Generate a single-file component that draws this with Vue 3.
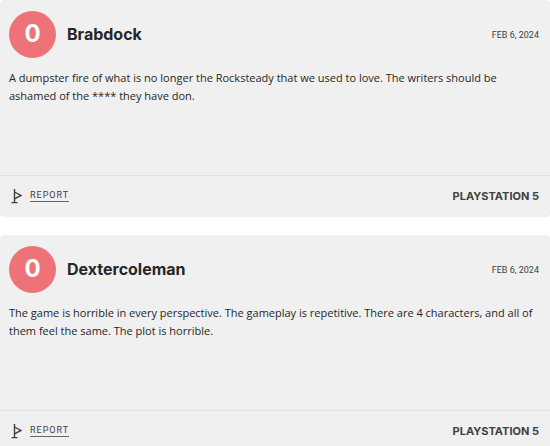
<script setup>
const reviews = [
  {
    id: 1,
    score: 0,
    author: 'Brabdock',
    date: 'Feb 6, 2024',
    text: 'A dumpster fire of what is no longer the Rocksteady that we used to love. The writers should be ashamed of the **** they have don.',
    platform: 'PlayStation 5',
  },
  {
    id: 2,
    score: 0,
    author: 'Dextercoleman',
    date: 'Feb 6, 2024',
    text: 'The game is horrible in every perspective. The gameplay is repetitive. There are 4 characters, and all of them feel the same. The plot is horrible.',
    platform: 'PlayStation 5',
  },
]
</script>

<template>
  <main class="reviews">
    <article v-for="review in reviews" :key="review.id" class="card">
      <header class="head">
        <span class="score">{{ review.score }}</span>
        <h3 class="author">{{ review.author }}</h3>
        <time class="date">{{ review.date }}</time>
      </header>
      <p class="text">{{ review.text }}</p>
      <footer class="foot">
        <button type="button" class="report">
          <svg class="flag" viewBox="0 0 12 16" aria-hidden="true">
            <path d="M3.5 1v14M.5 14.6h6" />
            <path d="M3.5 4l6.5 3.4-6.5 3.4" />
          </svg>
          <span class="report-label">Report</span>
        </button>
        <span class="platform">{{ review.platform }}</span>
      </footer>
    </article>
  </main>
</template>

<style>
body {
  margin: 0;
  background: #fff;
}
</style>

<style scoped>
.reviews {
  display: flex;
  flex-direction: column;
  gap: 18px;
  height: 100vh;
  overflow: hidden;
  font-family: Inter, "Liberation Sans", sans-serif;
  color: #262626;
}

.card {
  display: flex;
  flex: none;
  flex-direction: column;
  border-radius: 4px;
  background: #f0f0f0;
}

.head {
  display: flex;
  align-items: center;
  gap: 11px;
  padding: 11px 11px 0 9px;
}

.score {
  display: flex;
  align-items: center;
  justify-content: center;
  width: 47px;
  height: 47px;
  border-radius: 50%;
  background: #ee7378;
  color: #fff;
  font-size: 24px;
  font-weight: 700;
  line-height: 24px;
  padding-bottom: 2px;
  box-sizing: border-box;
}

.author {
  flex: 1;
  margin: 0;
  padding-bottom: 2px;
  font-size: 16px;
  font-weight: 700;
  line-height: 24px;
}

.date {
  color: #404040;
  font-family: Roboto, sans-serif;
  font-size: 9px;
  line-height: 12px;
  text-transform: uppercase;
}

.text {
  min-height: 94px;
  margin: 0;
  padding: 11px 9px 12px;
  font-family: "Open Sans", sans-serif;
  font-size: 11px;
  line-height: 18px;
}

.foot {
  display: flex;
  align-items: center;
  justify-content: space-between;
  height: 39px;
  padding: 0 11px 2px;
  border-top: 1px solid #e0e0e0;
}

.report {
  display: flex;
  align-items: center;
  gap: 7px;
  padding: 0;
  border: 0;
  background: none;
  color: #404040;
  font-family: Roboto, sans-serif;
  cursor: pointer;
}

.flag {
  width: 12px;
  height: 16px;
  fill: none;
  stroke: currentColor;
  stroke-width: 1.4;
}

.report-label {
  padding-top: 1px;
  border-bottom: 1px solid #666;
  font-size: 9px;
  letter-spacing: 1px;
  line-height: 11px;
  text-transform: uppercase;
}

.platform {
  color: #404040;
  font-size: 11px;
  font-weight: 700;
  line-height: 16px;
  text-transform: uppercase;
}
</style>
